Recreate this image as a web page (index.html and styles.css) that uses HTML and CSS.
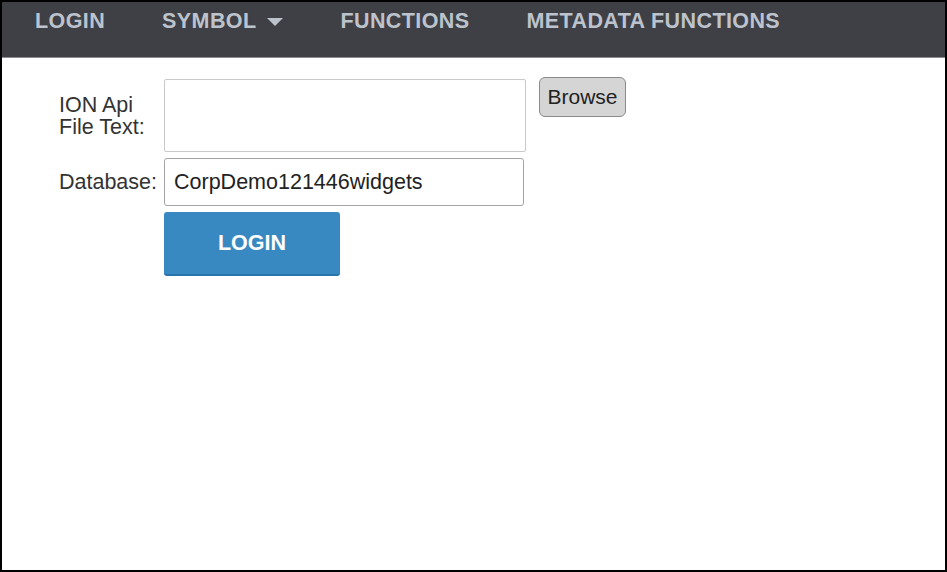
FILE: index.html
```html
<!DOCTYPE html>
<html lang="en">
<head>
<meta charset="utf-8">
<title>ION Api Login</title>
<link rel="stylesheet" href="styles.css">
</head>
<body>
<div class="frame">
  <nav class="navbar">
    <a class="nav-item">LOGIN</a>
    <a class="nav-item">SYMBOL <span class="caret"></span></a>
    <a class="nav-item">FUNCTIONS</a>
    <a class="nav-item">METADATA FUNCTIONS</a>
  </nav>
  <main class="content">
    <form class="login-form">
      <label class="field-label">ION Api<br>File Text:</label>
      <div class="file-row">
        <textarea class="file-text"></textarea>
        <button type="button" class="browse-btn">Browse</button>
      </div>
      <label class="field-label">Database:</label>
      <div><input class="db-input" type="text" value="CorpDemo121446widgets"></div>
      <div></div>
      <div><button type="button" class="login-btn">LOGIN</button></div>
    </form>
  </main>
</div>
</body>
</html>
```
FILE: styles.css
```css
html, body {
  margin: 0;
  padding: 0;
  background: #fff;
}
.frame {
  width: 947px;
  height: 572px;
  box-sizing: border-box;
  border: 2px solid #000;
  font-family: "Liberation Sans", Arial, sans-serif;
  overflow: hidden;
}
.navbar {
  display: flex;
  align-items: flex-start;
  height: 56px;
  box-sizing: border-box;
  padding: 7px 0 0 4px;
  background: #3f4045;
  border-bottom: 1px solid #8e8e8e;
}
.nav-item {
  display: flex;
  align-items: center;
  padding: 0 28px 0 29px;
  font-size: 21.5px;
  line-height: 24px;
  font-weight: bold;
  letter-spacing: 0.4px;
  color: #bcc3cc;
  white-space: pre;
}
.caret {
  display: inline-block;
  width: 0;
  height: 0;
  margin-left: 5px;
  margin-top: 2px;
  border-left: 8px solid transparent;
  border-right: 8px solid transparent;
  border-top: 8px solid #bcc3cc;
}
.content {
  padding: 21px 0 0 57px;
}
.login-form {
  display: grid;
  grid-template-columns: auto auto;
  justify-content: start;
  column-gap: 7px;
  row-gap: 6px;
}
.field-label {
  align-self: center;
  font-size: 21.5px;
  line-height: 22px;
  color: #333;
}
.file-row {
  display: flex;
  align-items: flex-start;
}
.file-text {
  width: 362px;
  height: 73px;
  box-sizing: border-box;
  border: 1px solid #c9c9c9;
  border-radius: 2px;
  resize: none;
  margin: 0;
  display: block;
}
.browse-btn {
  margin: -2px 0 0 13px;
  width: 87px;
  height: 40px;
  box-sizing: border-box;
  background: #d5d5d5;
  border: 1.5px solid #8a8a8a;
  border-radius: 6px;
  font-family: "Liberation Sans", Arial, sans-serif;
  font-size: 21px;
  color: #222;
  padding: 0;
}
.db-input {
  display: block;
  width: 360px;
  height: 48px;
  box-sizing: border-box;
  margin: 0;
  border: 1.5px solid #a4a4a4;
  border-radius: 3px;
  padding: 0 0 0 9px;
  font-family: "Liberation Sans", Arial, sans-serif;
  font-size: 21.5px;
  color: #222;
}
.login-btn {
  display: block;
  width: 176px;
  height: 64px;
  box-sizing: border-box;
  background: #3889c1;
  border: none;
  border-bottom: 2px solid #2874ad;
  border-radius: 3px;
  color: #fff;
  font-family: "Liberation Sans", Arial, sans-serif;
  font-size: 21.5px;
  font-weight: bold;
  padding: 0;
}
```
